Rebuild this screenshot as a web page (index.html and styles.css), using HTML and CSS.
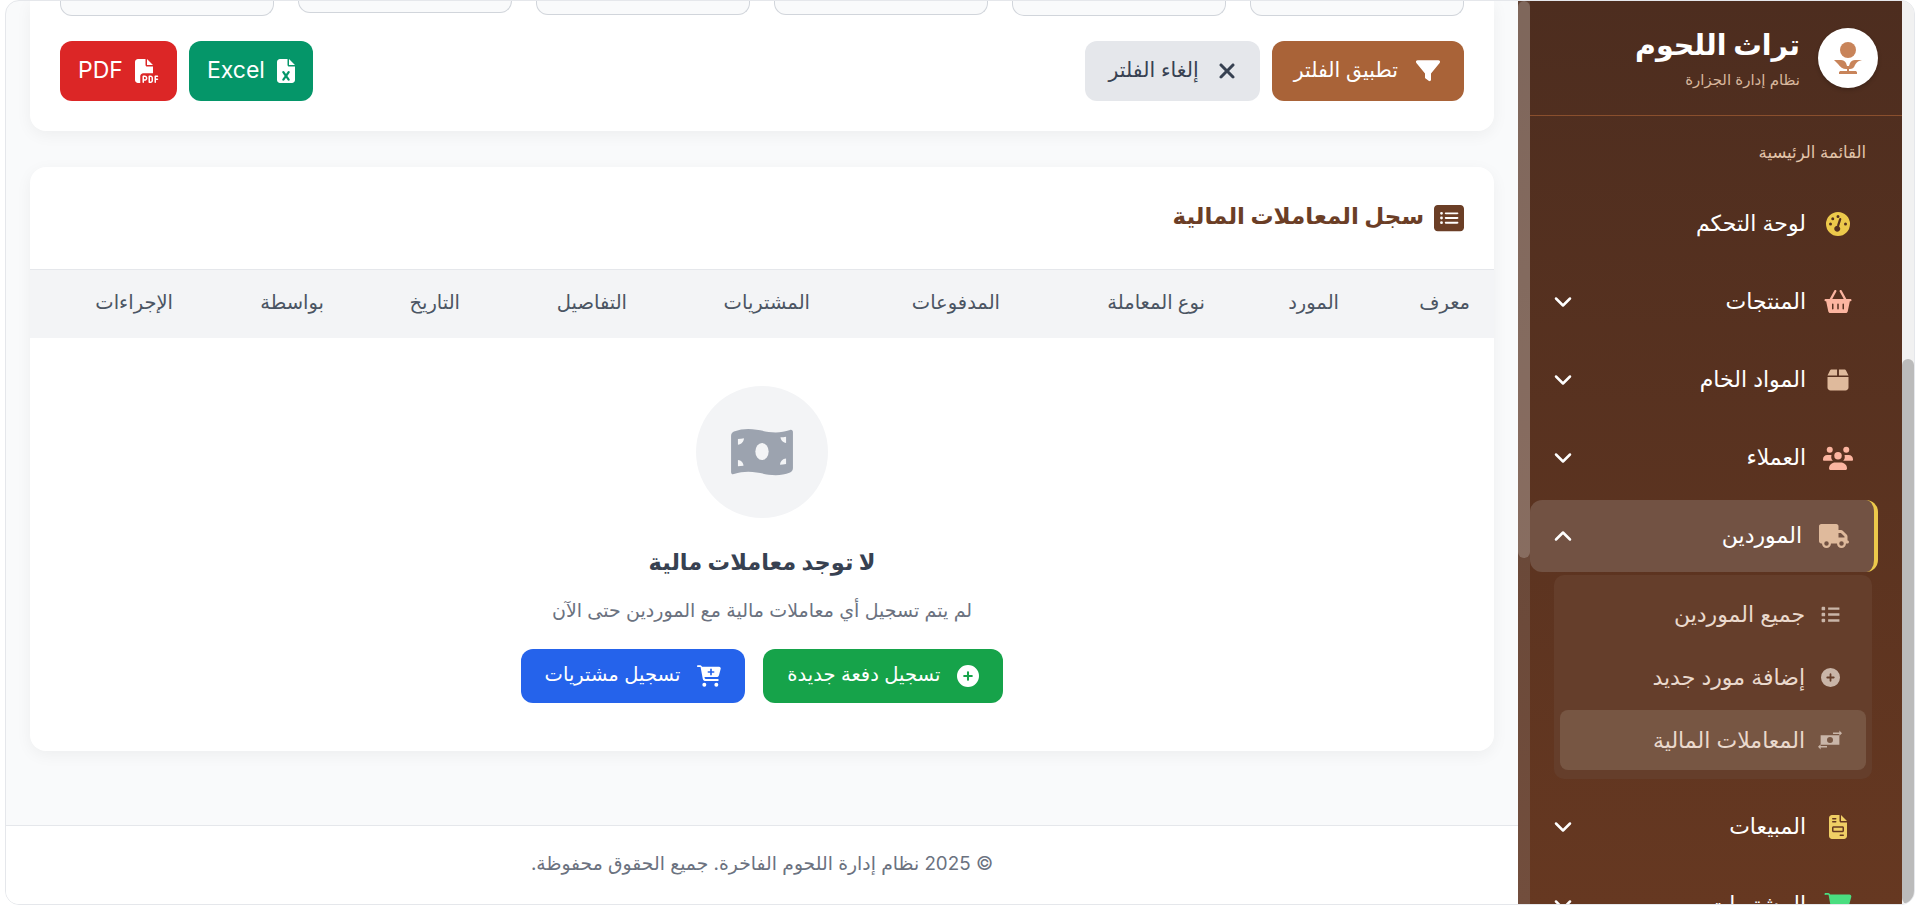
FILE: index.html
```html
<!DOCTYPE html>
<html lang="ar" dir="rtl">

<head>
    <meta charset="UTF-8">
    <meta name="viewport" content="width=device-width, initial-scale=1.0">
    <title>المعاملات المالية</title>
    <link rel="stylesheet" href="styles.css">
</head>

<body>
    <div class="window">
        <!-- page scrollbar -->
        <div class="page-scroll"><div class="page-thumb"></div></div>

        <!-- sidebar -->
        <aside class="sidebar">
            <div class="brand">
                <div class="brand-logo">
                    <svg viewBox="0 0 30 36" width="30" height="36"><circle cx="15" cy="10" r="8" fill="#c8845a"/><path d="M1 20h7c2 0 4 1 5 3l1 3h2l1-3c1-2 3-3 5-3h7l-3 1c-2 1-3 2-4 4-1 3-3 4-5 4h-1v2h6c1 0 2 .5 2 1.500V34H6v-1.500C6 31.500 7 31 8 31h6v-2h-1c-3 0-6-2-8-5z" fill="#c8845a"/></svg>
                </div>
                <div class="brand-text">
                    <div class="brand-name">تراث اللحوم</div>
                    <div class="brand-sub">نظام إدارة الجزارة</div>
                </div>
            </div>

            <div class="menu-label">القائمة الرئيسية</div>

            <a class="menu-item">
                <svg class="menu-icon" viewBox="0 0 512 512" fill="#ecc94b"><path d="M256 0a256 256 0 1 0 0 512A256 256 0 1 0 256 0zm32 96a32 32 0 1 1-64 0 32 32 0 1 1 64 0zM256 288c-9 0-17 2-24 6l48-150c4-13 18-20 30-16s20 18 16 30l-48 150c15 12 26 30 26 50 0 35-29 64-64 64s-64-29-64-64 29-64 64-64zM144 176a32 32 0 1 1 0-64 32 32 0 1 1 0 64zM96 288a32 32 0 1 1 0-64 32 32 0 1 1 0 64zm352-32a32 32 0 1 1-64 0 32 32 0 1 1 64 0z"/></svg>
                <span class="menu-text">لوحة التحكم</span>
            </a>
            <a class="menu-item">
                <svg class="menu-icon wide" viewBox="0 0 576 512" fill="#fcb5a0"><path d="M253 33c6-12 1-26-10-33s-26-1-33 10L110 192H24c-13 0-24 11-24 24s11 24 24 24h11l46 218c4 18 20 32 39 32h336c19 0 35-14 39-32l46-218h11c13 0 24-11 24-24s-11-24-24-24h-86L366 10c-7-11-22-16-33-10s-16 21-10 33l87 159H166zM192 304v96c0 9-7 16-16 16s-16-7-16-16v-96c0-9 7-16 16-16s16 7 16 16zm96-16c9 0 16 7 16 16v96c0 9-7 16-16 16s-16-7-16-16v-96c0-9 7-16 16-16zm128 16v96c0 9-7 16-16 16s-16-7-16-16v-96c0-9 7-16 16-16s16 7 16 16z"/></svg>
                <span class="menu-text">المنتجات</span>
                <svg class="chev" viewBox="0 0 18 12"><path d="M2 2.500l7 7 7-7"/></svg>
            </a>
            <a class="menu-item">
                <svg class="menu-icon" viewBox="0 0 448 512" fill="#dfba9c"><path d="M50 59C57 43 72 32 90 32h114v128H0v-2zM448 160H244V32h114c18 0 33 11 40 27zM448 192v224c0 35-29 64-64 64H64c-35 0-64-29-64-64V192z"/></svg>
                <span class="menu-text">المواد الخام</span>
                <svg class="chev" viewBox="0 0 18 12"><path d="M2 2.500l7 7 7-7"/></svg>
            </a>
            <a class="menu-item">
                <svg class="menu-icon wide" viewBox="0 0 640 512" fill="#fcb5a0"><circle cx="144" cy="80" r="64"/><circle cx="496" cy="80" r="64"/><circle cx="320" cy="208" r="80"/><path d="M0 280c0-50 40-90 90-90h54c14 0 28 3 40 9-6 11-8 25-8 39 0 31 13 58 34 77H24c-13 0-24-11-24-24zM430 315c21-19 34-46 34-77 0-14-2-28-8-39 12-6 26-9 40-9h54c50 0 90 40 90 90v11c0 13-11 24-24 24z"/><path d="M128 480c0-75 61-128 136-128h112c75 0 136 53 136 128 0 18-14 32-32 32H160c-18 0-32-14-32-32z"/></svg>
                <span class="menu-text">العملاء</span>
                <svg class="chev" viewBox="0 0 18 12"><path d="M2 2.500l7 7 7-7"/></svg>
            </a>
            <a class="menu-item active">
                <svg class="menu-icon wide" viewBox="0 0 640 512" fill="#dfba9c"><path d="M48 0C21 0 0 21 0 48v320c0 26 21 48 48 48h16c0 53 43 96 96 96s96-43 96-96h128c0 53 43 96 96 96s96-43 96-96h32c18 0 32-14 32-32s-14-32-32-32V269c0-17-7-33-19-45l-77-77c-12-12-28-19-45-19h-51V48c0-27-21-48-48-48zm368 192h51l77 77v19H416zM160 368a48 48 0 1 1 0 96 48 48 0 1 1 0-96zm272 48a48 48 0 1 1 96 0 48 48 0 1 1-96 0z"/></svg>
                <span class="menu-text">الموردين</span>
                <svg class="chev" viewBox="0 0 18 12"><path d="M2 9.500l7-7 7 7"/></svg>
            </a>

            <div class="submenu">
                <a class="sub-item">
                    <span class="sub-icon"><svg width="19" height="19" viewBox="0 0 512 512" fill="#c9b5a8"><path d="M40 48h48c13 0 24 11 24 24v48c0 13-11 24-24 24H40c-13 0-24-11-24-24V72c0-13 11-24 24-24zm152 16h304v64H192zm0 160h304v64H192zm0 160h304v64H192zM40 208h48c13 0 24 11 24 24v48c0 13-11 24-24 24H40c-13 0-24-11-24-24v-48c0-13 11-24 24-24zm0 160h48c13 0 24 11 24 24v48c0 13-11 24-24 24H40c-13 0-24-11-24-24v-48c0-13 11-24 24-24z"/></svg></span>
                    <span>جميع الموردين</span>
                </a>
                <a class="sub-item">
                    <span class="sub-icon"><svg width="19" height="19" viewBox="0 0 512 512" fill="#c9b5a8"><path d="M256 512a256 256 0 1 0 0-512 256 256 0 1 0 0 512zm-24-168v-64h-64c-13 0-24-11-24-24s11-24 24-24h64v-64c0-13 11-24 24-24s24 11 24 24v64h64c13 0 24 11 24 24s-11 24-24 24h-64v64c0 13-11 24-24 24s-24-11-24-24z"/></svg></span>
                    <span>إضافة مورد جديد</span>
                </a>
                <a class="sub-item active">
                    <span class="sub-icon"><svg width="24" height="20" viewBox="0 0 640 512" fill="#c9b5a8"><path d="M70 130h500v252H70zM320 176a80 80 0 1 0 0 160 80 80 0 1 0 0-160z" fill-rule="evenodd"/><path d="M400 55h170V5l70 70-70 70V95H400zM240 457H70v50L0 437l70-70v50h170z"/></svg></span>
                    <span>المعاملات المالية</span>
                </a>
            </div>

            <a class="menu-item">
                <svg class="menu-icon" viewBox="0 0 384 512" fill="#f0cf65"><path d="M64 0C29 0 0 29 0 64v384c0 35 29 64 64 64h256c35 0 64-29 64-64V160H256c-18 0-32-14-32-32V0zm192 0v128h128zM64 80c0-9 7-16 16-16h64c9 0 16 7 16 16s-7 16-16 16H80c-9 0-16-7-16-16zm0 64c0-9 7-16 16-16h64c9 0 16 7 16 16s-7 16-16 16H80c-9 0-16-7-16-16zm32 96h192c18 0 32 14 32 32v64c0 18-14 32-32 32H96c-18 0-32-14-32-32v-64c0-18 14-32 32-32zm0 32v64h192v-64zm144 144h64c9 0 16 7 16 16s-7 16-16 16h-64c-9 0-16-7-16-16s7-16 16-16z"/></svg>
                <span class="menu-text">المبيعات</span>
                <svg class="chev" viewBox="0 0 18 12"><path d="M2 2.500l7 7 7-7"/></svg>
            </a>
            <a class="menu-item">
                <svg class="menu-icon wide" viewBox="0 0 576 512" fill="#4ade80"><path d="M0 24C0 11 11 0 24 0h45c22 0 42 12 52 32h411c26 0 46 25 39 51l-41 152c-8 28-33 47-62 47H180l5 29c2 11 12 19 24 19h287c13 0 24 11 24 24s-11 24-24 24H209c-35 0-65-25-71-59L87 44c-1-4-4-6-8-6H24C11 48 0 37 0 24z"/></svg>
                <span class="menu-text">المشتريات</span>
                <svg class="chev" viewBox="0 0 18 12"><path d="M2 2.500l7 7 7-7"/></svg>
            </a>
        </aside>

        <!-- sidebar scrollbar -->
        <div class="side-scroll"><div class="side-thumb"></div></div>

        <!-- main -->
        <main class="main">
            <div class="content">
                <section class="card filter-card">
                    <div class="filter-fields">
                        <div class="field"></div>
                        <div class="field"></div>
                        <div class="field f-mid"></div>
                        <div class="field f-mid"></div>
                        <div class="field f-short"></div>
                        <div class="field"></div>
                    </div>
                    <div class="filter-actions">
                        <button class="btn btn-brown">
                            <svg class="btn-icon" viewBox="0 0 512 512" fill="#fff"><path d="M3 45C9 32 22 24 36 24h440c14 0 27 8 33 21s4 28-5 39L320 310v130c0 12-7 23-18 29s-23 4-33-3l-64-48c-8-6-13-15-13-26V310L8 84C-1 73-3 58 3 45z"/></svg>
                            <span>تطبيق الفلتر</span>
                        </button>
                        <button class="btn btn-gray">
                            <svg class="btn-icon x" viewBox="0 0 384 512" fill="#374151"><path d="M343 151c13-13 13-33 0-46s-33-13-46 0L192 211 87 105c-13-13-33-13-46 0s-13 33 0 46l106 105L41 361c-13 13-13 33 0 46s33 13 46 0l105-106 105 106c13 13 33 13 46 0s13-33 0-46L237 256z"/></svg>
                            <span>إلغاء الفلتر</span>
                        </button>
                        <div class="spacer"></div>
                        <button class="btn btn-excel">
                            <svg class="btn-icon x" viewBox="0 0 384 512" fill="#fff"><path d="M64 0C29 0 0 29 0 64v384c0 35 29 64 64 64h256c35 0 64-29 64-64V160H256c-18 0-32-14-32-32V0zm192 0v128h128zM155 265l37 54 37-54c7-11 22-14 33-6s14 22 6 33l-47 68 47 68c8 11 5 25-6 33s-26 5-33-6l-37-54-37 54c-7 11-22 14-33 6s-14-22-6-33l47-68-47-68c-8-11-5-25 6-33s26-5 33 6z" fill-rule="evenodd"/></svg>
                            <span class="latin">Excel</span>
                        </button>
                        <button class="btn btn-pdf">
                            <svg class="btn-icon" viewBox="0 0 512 512" fill="#fff"><path d="M0 64C0 29 29 0 64 0h160v128c0 18 14 32 32 32h128v144H176c-35 0-64 29-64 64v144H64c-35 0-64-29-64-64zm384 64H256V0zM176 352h32c31 0 56 25 56 56s-25 56-56 56h-16v32c0 9-7 16-16 16s-16-7-16-16V368c0-9 7-16 16-16zm32 80c13 0 24-11 24-24s-11-24-24-24h-16v48zm96-80h32c26 0 48 22 48 48v64c0 26-22 48-48 48h-32c-9 0-16-7-16-16V368c0-9 7-16 16-16zm32 128c9 0 16-7 16-16v-64c0-9-7-16-16-16h-16v96zm80-112c0-9 7-16 16-16h48c9 0 16 7 16 16s-7 16-16 16h-32v32h32c9 0 16 7 16 16s-7 16-16 16h-32v48c0 9-7 16-16 16s-16-7-16-16z"/></svg>
                            <span class="latin">PDF</span>
                        </button>
                    </div>
                </section>

                <section class="card log-card">
                    <h2 class="log-title">
                        <svg class="log-icon" viewBox="0 0 512 512" fill="#6b3e26"><path d="M64 32C29 32 0 61 0 96v320c0 35 29 64 64 64h384c35 0 64-29 64-64V96c0-35-29-64-64-64zm64 120a24 24 0 1 1 0 48 24 24 0 1 1 0-48zm72 8h200c9 0 16 7 16 16s-7 16-16 16H200c-9 0-16-7-16-16s7-16 16-16zm-72 72a24 24 0 1 1 0 48 24 24 0 1 1 0-48zm72 8h200c9 0 16 7 16 16s-7 16-16 16H200c-9 0-16-7-16-16s7-16 16-16zm-72 72a24 24 0 1 1 0 48 24 24 0 1 1 0-48zm72 8h200c9 0 16 7 16 16s-7 16-16 16H200c-9 0-16-7-16-16s7-16 16-16z" fill-rule="evenodd"/></svg>
                        <span>سجل المعاملات المالية</span>
                    </h2>
                    <table class="log-table">
                        <colgroup>
                            <col class="c1"><col class="c2"><col class="c3"><col class="c4"><col class="c5"><col class="c6"><col class="c7"><col class="c8"><col class="c9">
                        </colgroup>
                        <thead>
                            <tr>
                                <th>معرف</th>
                                <th>المورد</th>
                                <th>نوع المعاملة</th>
                                <th>المدفوعات</th>
                                <th>المشتريات</th>
                                <th>التفاصيل</th>
                                <th>التاريخ</th>
                                <th>بواسطة</th>
                                <th>الإجراءات</th>
                            </tr>
                        </thead>
                    </table>
                    <div class="empty">
                        <div class="empty-circle">
                            <svg viewBox="0 0 576 512" width="62" height="55" fill="#9ca3af"><path d="M0 112c0-19 10-36 27-42 44-17 88-24 133-24 96 0 160 32 256 32 44 0 88-7 133-22 15-5 27 4 27 20v334c0 19-10 36-27 42-44 17-88 24-133 24-96 0-160-32-256-32-44 0-88 7-133 22-15 5-27-4-27-20z" /><ellipse cx="288" cy="256" rx="62" ry="80" fill="#f3f4f6"/><path d="M64 140c20-2 38-5 56-7 0 30-25 58-56 60zM512 118v58c-28-2-50-24-52-52 18-1 35-3 52-6zM64 336c28 2 50 24 52 52-18 1-35 3-52 6zM512 320v52c-20 2-38 5-56 7 0-30 25-58 56-59z" fill="#f3f4f6"/></svg>
                        </div>
                        <h3 class="empty-title">لا توجد معاملات مالية</h3>
                        <p class="empty-text">لم يتم تسجيل أي معاملات مالية مع الموردين حتى الآن</p>
                        <div class="empty-actions">
                            <button class="btn btn-small btn-green">
                                <svg class="btn-icon-sm" viewBox="0 0 512 512" fill="#fff"><path d="M256 512a256 256 0 1 0 0-512 256 256 0 1 0 0 512zm-24-168v-64h-64c-13 0-24-11-24-24s11-24 24-24h64v-64c0-13 11-24 24-24s24 11 24 24v64h64c13 0 24 11 24 24s-11 24-24 24h-64v64c0 13-11 24-24 24s-24-11-24-24z"/></svg>
                                <span>تسجيل دفعة جديدة</span>
                            </button>
                            <button class="btn btn-small btn-blue">
                                <svg class="btn-icon-sm cart" viewBox="0 0 576 512" fill="#fff"><path d="M0 24C0 11 11 0 24 0h45c22 0 42 14 50 32h411c26 0 46 25 39 51l-41 152c-8 28-33 47-62 47H180l5 29c2 11 12 19 24 19h287c13 0 24 11 24 24s-11 24-24 24H209c-35 0-65-25-71-59L87 44c-1-4-4-6-8-6H24C11 48 0 37 0 24zm128 440a48 48 0 1 1 96 0 48 48 0 1 1-96 0zm336-48a48 48 0 1 1 0 96 48 48 0 1 1 0-96zM252 160c0 11 9 20 20 20h44v44c0 11 9 20 20 20s20-9 20-20v-44h44c11 0 20-9 20-20s-9-20-20-20h-44V96c0-11-9-20-20-20s-20 9-20 20v44h-44c-11 0-20 9-20 20z" fill-rule="evenodd"/></svg>
                                <span>تسجيل مشتريات</span>
                            </button>
                        </div>
                    </div>
                </section>
            </div>

            <footer class="footer">© 2025 نظام إدارة اللحوم الفاخرة. جميع الحقوق محفوظة.</footer>
        </main>
    </div>
</body>

</html>
```

FILE: styles.css
```css
* {
    box-sizing: border-box;
}

html, body {
    height: 100%;
    margin: 0;
    overflow: hidden;
}

body {
    background-color: #fff;
    padding: 0 4px 0 5px;
    font-family: "Inter", "Noto Sans", "DejaVu Sans", sans-serif;
}

.window {
    display: flex;
    height: 905px;
    border: 1px solid #e5e7eb;
    border-radius: 14px;
    overflow: hidden;
    background-color: #f9fafb;
}

/* scrollbars */
.page-scroll {
    width: 12px;
    flex-shrink: 0;
    background-color: #f1f1f1;
    display: flex;
    flex-direction: column;
    justify-content: flex-end;
}

.page-thumb {
    height: 545px;
    background-color: #bbb;
    border-radius: 6px;
}

.side-scroll {
    width: 12px;
    flex-shrink: 0;
    background: linear-gradient(180deg, #5f4133 0%, #724e3d 100%);
}

.side-thumb {
    height: 557px;
    background-color: rgba(255,255,255,0.2);
    border-radius: 6px;
}

/* sidebar */
.sidebar {
    width: 372px;
    flex-shrink: 0;
    overflow: hidden;
    background: linear-gradient(180deg, #4d2d1f 0%, #663821 100%);
    color: #fff;
}

.brand {
    display: flex;
    align-items: center;
    gap: 18px;
    height: 115px;
    padding: 0 24px;
    border-bottom: 1px solid #8a4f2d;
}

.brand-logo {
    width: 60px;
    height: 60px;
    border-radius: 50%;
    background-color: #fff;
    display: flex;
    align-items: center;
    justify-content: center;
    box-shadow: 0 2px 4px rgba(0,0,0,0.2);
}

.brand-name {
    font-size: 28.500px;
    font-weight: 700;
    line-height: 36px;
    margin-bottom: 7px;
}

.brand-sub {
    font-size: 15px;
    line-height: 20px;
    color: #d8b79d;
}

.menu-label {
    padding: 23px 36px 0 0;
    height: 72px;
    font-size: 16.500px;
    line-height: 26px;
    color: #e3c5aa;
}

.menu-item {
    display: flex;
    align-items: center;
    height: 72px;
    margin: 0 24px 6px 0;
    padding: 0 24px;
    font-size: 22px;
}

.menu-item.active {
    background-color: #725243;
    border-radius: 12px;
    border-right: 4px solid #ecc94b;
    margin-bottom: 3px;
}

.menu-icon {
    width: 24px;
    height: 24px;
    margin: 0 4px 0 4px;
    flex-shrink: 0;
}

.menu-icon.wide {
    width: 30px;
    margin: 0 1px;
}

.menu-text {
    margin-right: 16px;
    margin-bottom: 3px;
    flex: 1;
}

.chev {
    width: 18px;
    height: 12px;
    fill: none;
    stroke: #fff;
    stroke-width: 2.500;
    stroke-linecap: round;
    stroke-linejoin: round;
}

.submenu {
    margin: 0 30px 12px 24px;
    padding: 9px 6px;
    height: 204px;
    background-color: #653e2b;
    border-radius: 10px;
}

.sub-item {
    display: flex;
    align-items: center;
    gap: 13px;
    height: 60px;
    margin-bottom: 3px;
    padding: 0 24px 0 16px;
    border-radius: 8px;
    font-size: 22px;
    color: #ead9cd;
}

.sub-item.active {
    background-color: #775643;
}

.sub-icon {
    width: 24px;
    flex-shrink: 0;
    display: flex;
    justify-content: center;
}

/* main */
.main {
    flex: 1;
    min-width: 0;
    display: flex;
    flex-direction: column;
    justify-content: space-between;
}

.content {
    padding: 0 24px;
}

.card {
    background-color: #fff;
    border-radius: 16px;
    box-shadow: 0 4px 16px rgba(0,0,0,0.05);
}

.filter-card {
    padding: 0 30px;
    height: 130px;
    border-radius: 0 0 16px 16px;
}

.filter-fields {
    display: grid;
    grid-template-columns: repeat(6, 1fr);
    gap: 24px;
    height: 15px;
}

.field {
    height: 15px;
    background-color: #f9fafb;
    border: 1px solid #d1d5db;
    border-top: none;
    border-radius: 0 0 12px 12px;
}

.field.f-mid {
    height: 14px;
}

.field.f-short {
    height: 12px;
}

.filter-actions {
    display: flex;
    gap: 12px;
    margin-top: 25px;
}

.spacer {
    flex: 1;
}

.btn {
    display: flex;
    align-items: center;
    gap: 16px;
    height: 60px;
    padding: 0 24px;
    border: none;
    border-radius: 12px;
    font-family: inherit;
    font-size: 20.500px;
    color: #fff;
}

.btn span {
    margin-bottom: 3px;
}

.btn .latin {
    font-size: 23px;
    font-weight: 400;
}

.btn-icon {
    width: 24px;
    height: 24px;
}

.btn-icon.x {
    width: 18px;
}

.btn-brown {
    background-color: #a96338;
    gap: 18px;
    padding-left: 22px;
}

.btn-gray {
    background-color: #e5e7eb;
    color: #374151;
    gap: 19px;
}

.btn-excel {
    background-color: #059669;
    padding: 0 18px;
    gap: 12px;
}

.btn-pdf {
    background-color: #dc2626;
    padding: 0 18px;
    gap: 12px;
}

.log-card {
    margin-top: 36px;
    overflow: hidden;
}

.log-title {
    display: flex;
    align-items: center;
    gap: 10px;
    height: 102px;
    margin: 0;
    padding: 0 30px;
    font-size: 23px;
    font-weight: 700;
    color: #6b3e26;
}

.log-title span {
    margin-bottom: 4px;
}

.log-icon {
    width: 30px;
    height: 30px;
}

.log-table {
    width: 100%;
    border-collapse: collapse;
    table-layout: fixed;
}

.c1 { width: 131px; }
.c2 { width: 134px; }
.c3 { width: 205px; }
.c4 { width: 190px; }
.c5 { width: 183px; }
.c6 { width: 167px; }
.c7 { width: 136px; }
.c8 { width: 151px; }
.c9 { width: 167px; }

.log-table th {
    height: 68px;
    padding: 0 24px 4px;
    background-color: #f3f4f6;
    border-top: 1px solid #e5e7eb;
    text-align: right;
    font-size: 19.500px;
    font-weight: 500;
    color: #4b5563;
}

.empty {
    display: flex;
    flex-direction: column;
    align-items: center;
    padding: 48px 0;
}

.empty-circle {
    width: 132px;
    height: 132px;
    border-radius: 50%;
    background-color: #f3f4f6;
    display: flex;
    align-items: center;
    justify-content: center;
}

.empty-title {
    margin: 26px 0 0;
    font-size: 22.500px;
    line-height: 36px;
    font-weight: 700;
    color: #374151;
}

.empty-text {
    margin: 17px 0 0;
    font-size: 19px;
    line-height: 27px;
    color: #6b7280;
}

.empty-actions {
    display: flex;
    gap: 18px;
    margin-top: 25px;
}

.btn-small {
    height: 54px;
    font-size: 19.500px;
    gap: 17px;
}

.btn-icon-sm {
    width: 22px;
    height: 22px;
}

.btn-icon-sm.cart {
    width: 24px;
}

.btn-green {
    background-color: #16a34a;
}

.btn-blue {
    background-color: #2563eb;
}

.footer {
    height: 79px;
    background-color: #fff;
    border-top: 1px solid #e5e7eb;
    text-align: center;
    font-size: 18.800px;
    line-height: 76px;
    color: #6b7280;
}
```
